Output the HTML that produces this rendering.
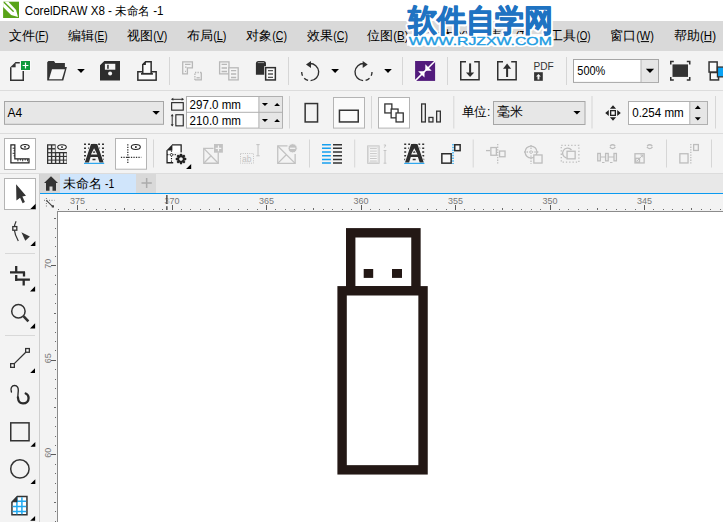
<!DOCTYPE html>
<html><head><meta charset="utf-8">
<style>
html,body{margin:0;padding:0;width:723px;height:522px;overflow:hidden;background:#f3f3f3}
svg{display:block}
text{font-family:"Liberation Sans",sans-serif}
</style></head><body>
<svg width="723" height="522" viewBox="0 0 723 522">
<!-- backgrounds -->
<rect x="0" y="0" width="723" height="21" fill="#ffffff"/>
<rect x="0" y="21" width="723" height="30" fill="#d9d9d9"/>
<rect x="0" y="51" width="723" height="471" fill="#f3f3f3"/>
<rect x="0" y="90" width="723" height="1" fill="#dcdcdc"/>
<rect x="0" y="133" width="723" height="1" fill="#dcdcdc"/>
<rect x="0" y="173" width="723" height="1" fill="#dcdcdc"/>
<!-- tab bar -->
<rect x="39" y="174" width="684" height="19" fill="#e8e8e8"/>
<rect x="40" y="174" width="20" height="19" fill="#d6d6d6"/>
<rect x="60" y="174" width="76" height="19" fill="#d0e5fb"/>
<rect x="136" y="174" width="20" height="19" fill="#d9d9d9"/>
<rect x="39" y="193" width="684" height="1" fill="#0a9af0"/>
<!-- rulers -->
<rect x="39" y="194" width="684" height="328" fill="#f3f3f3"/>
<rect x="39" y="174" width="1" height="348" fill="#cfcfcf"/>
<rect x="57" y="211" width="666" height="1" fill="#8c8c8c"/>
<rect x="57" y="211" width="1" height="311" fill="#8c8c8c"/>
<rect x="58" y="212" width="665" height="310" fill="#ffffff"/>
<!-- title -->
<rect x="3.1" y="1.7" width="15.9" height="16.3" fill="#58a317"/>
<path d="M3.1 1.7 H8.4 L16.1 10 L18 16.9 L11.1 14.9 L3.1 7.1 Z" fill="#fff"/>
<path d="M4.3 2.6 L13.2 11.3" stroke="#58a317" stroke-width="1.4" stroke-linecap="round"/>
<text x="24.8" y="14.8" font-size="12" fill="#000" textLength="138.7" lengthAdjust="spacingAndGlyphs">CorelDRAW X8 - 未命名 -1</text>
<!-- menu -->
<g fill="#000">
<text x="8.6" y="40.3" font-size="13.2">文件</text>
<text x="35.0" y="39.8" font-size="12" textLength="13.6" lengthAdjust="spacingAndGlyphs">(F)</text>
<rect x="38.5" y="41.1" width="6.3" height="1" fill="#000"/>
<text x="67.9" y="40.3" font-size="13.2">编辑</text>
<text x="94.3" y="39.8" font-size="12" textLength="13.3" lengthAdjust="spacingAndGlyphs">(E)</text>
<rect x="97.8" y="41.1" width="6.1" height="1" fill="#000"/>
<text x="126.8" y="40.3" font-size="13.2">视图</text>
<text x="153.2" y="39.8" font-size="12" textLength="14.1" lengthAdjust="spacingAndGlyphs">(V)</text>
<rect x="156.9" y="41.1" width="6.5" height="1" fill="#000"/>
<text x="186.8" y="40.3" font-size="13.2">布局</text>
<text x="213.2" y="39.8" font-size="12" textLength="13.3" lengthAdjust="spacingAndGlyphs">(L)</text>
<rect x="216.7" y="41.1" width="6.1" height="1" fill="#000"/>
<text x="245.8" y="40.3" font-size="13.2">对象</text>
<text x="272.2" y="39.8" font-size="12" textLength="14.8" lengthAdjust="spacingAndGlyphs">(C)</text>
<rect x="276.0" y="41.1" width="6.8" height="1" fill="#000"/>
<text x="306.8" y="40.3" font-size="13.2">效果</text>
<text x="333.2" y="39.8" font-size="12" textLength="14.8" lengthAdjust="spacingAndGlyphs">(C)</text>
<rect x="337.0" y="41.1" width="6.8" height="1" fill="#000"/>
<text x="366.8" y="40.3" font-size="13.2">位图</text>
<text x="393.2" y="39.8" font-size="12" textLength="15.3" lengthAdjust="spacingAndGlyphs">(B)</text>
<rect x="397.2" y="41.1" width="7.0" height="1" fill="#000"/>
<text x="427.5" y="40.3" font-size="13.2">文本</text>
<text x="453.9" y="39.8" font-size="12" textLength="15.1" lengthAdjust="spacingAndGlyphs">(X)</text>
<rect x="457.8" y="41.1" width="6.9" height="1" fill="#000"/>
<text x="489" y="40.3" font-size="13.2">表格</text>
<text x="515.4" y="39.8" font-size="12" textLength="14.6" lengthAdjust="spacingAndGlyphs">(T)</text>
<rect x="519.2" y="41.1" width="6.7" height="1" fill="#000"/>
<text x="550" y="40.3" font-size="13.2">工具</text>
<text x="576.4" y="39.8" font-size="12" textLength="14.1" lengthAdjust="spacingAndGlyphs">(O)</text>
<rect x="580.1" y="41.1" width="6.5" height="1" fill="#000"/>
<text x="609.8" y="40.3" font-size="13.2">窗口</text>
<text x="636.2" y="39.8" font-size="12" textLength="17.8" lengthAdjust="spacingAndGlyphs">(W)</text>
<rect x="640.8" y="41.1" width="8.2" height="1" fill="#000"/>
<text x="673.6" y="40.3" font-size="13.2">帮助</text>
<text x="700.0" y="39.8" font-size="12" textLength="16.0" lengthAdjust="spacingAndGlyphs">(H)</text>
<rect x="704.2" y="41.1" width="7.4" height="1" fill="#000"/>
</g>
<!-- ===== toolbar 1 ===== -->
<g id="tb1">
<!-- new -->
<path d="M10.75 67.5 V80.25 H23.25 V71" fill="none" stroke="#333" stroke-width="1.5"/>
<path d="M15.2 62.75 H19.8" fill="none" stroke="#333" stroke-width="1.5"/>
<path d="M10 67.6 L15.6 62 V67.6 Z" fill="#333"/>
<rect x="10.75" y="67.6" width="12.5" height="12.65" fill="#f7f7f7"/>
<path d="M10.75 67.5 V80.25 H23.25 V71" fill="none" stroke="#333" stroke-width="1.5"/>
<rect x="20" y="60" width="11" height="11" fill="#fafafa"/>
<rect x="21" y="61" width="9" height="9" fill="#0e9a3c"/>
<path d="M22.6 65.5 H28.4 M25.5 62.6 V68.4" stroke="#fff" stroke-width="1.2"/>
<!-- open -->
<path d="M47.2 62.3 L48.4 61.1 H54 L55.3 62.9 H64.9 V67 H66.9 L63.3 80.6 H47.2 Z" fill="#333"/>
<path d="M52 69.2 H64.9 L61.9 79.2 H49 Z" fill="#f7f7f7"/>
<path d="M77.2 69 H84.8 L81 72.9 Z" fill="#000"/>
<!-- save -->
<path d="M100 65.3 L104.3 61 H120 V80.5 H100 Z" fill="#2d2d2d"/>
<rect x="104.9" y="63.8" width="10.4" height="5.9" fill="#f4f4f4"/>
<rect x="107.2" y="64.8" width="1.5" height="4" fill="#2d2d2d"/>
<circle cx="110.1" cy="73.5" r="2" fill="#f4f4f4"/>
<!-- print -->
<rect x="137.85" y="71.75" width="18.3" height="8.4" fill="#fafafa" stroke="#2d2d2d" stroke-width="1.5"/>
<path d="M142.75 73.8 V64.6 L145.6 61.85 H151.15 V73.8" fill="#fafafa" stroke="#2d2d2d" stroke-width="1.5"/>
<path d="M142.2 64.9 L145.9 61.3 V64.9 Z" fill="#2d2d2d"/>
<rect x="141" y="72.9" width="11.9" height="1.8" fill="#2d2d2d"/>
<rect x="169" y="57" width="1" height="28" fill="#d6d6d6"/>
<!-- disabled 1 -->
<g fill="none" stroke="#b8b8b8" stroke-width="1.3">
<path d="M182.7 61.8 H192.4 V67.8 H187.4 V73.8 H182.7 Z"/>
<path d="M185 64.4 H190.5 M185 67.2 H186.6 M185 71.3 H186"/>
<path d="M194.9 79.9 V72.5 H201.3" stroke-dasharray="1.3 1.2"/>
<path d="M201.3 72.5 V79.9 H194.9" />
<path d="M196.5 77.8 H199.8"/>
</g>
<!-- disabled 2 -->
<g fill="none" stroke="#b8b8b8" stroke-width="1.3">
<path d="M219.6 61.8 H229 V73.8 H219.6 Z"/>
<path d="M221.6 64.4 H227 M221.6 68 H227 M221.6 71.5 H227"/>
<rect x="228.8" y="67.8" width="9.4" height="12.1" fill="#f5f5f5"/>
<path d="M231 70.6 H236.2 M231 74 H236.2 M231 77.5 H236.2"/>
</g>
<!-- doc manager -->
<path d="M255.9 63.6 Q255.9 61.1 258.5 61.1 H263.4 Q266 61.1 266 63.6 V74.8 H255.9 Z" fill="#2f2f2f"/>
<path d="M257.8 62.6 H264" stroke="#9a9a9a" stroke-width="1"/>
<rect x="264.2" y="66.2" width="12.6" height="15.2" fill="#f3f3f3"/>
<rect x="265.65" y="67.65" width="9.7" height="12.3" fill="#fafafa" stroke="#2f2f2f" stroke-width="1.5"/>
<path d="M268 70.6 H273 M268 74 H273 M268 77.4 H273" stroke="#555" stroke-width="1.4"/>
<rect x="288" y="57" width="1" height="28" fill="#d6d6d6"/>
<!-- undo -->
<g fill="none" stroke="#2f2f2f" stroke-width="1.35">
<path d="M309.55 63.5 A8.6 8.6 0 0 1 310.6 80.7"/>
<path d="M308.1 80.4 A8.6 8.6 0 0 1 304.2 78.2"/>
<path d="M302.5 75.7 A8.6 8.6 0 0 1 301.7 72.1"/>
</g>
<path d="M306 64.5 L311 61.1 V68 Z" fill="#2f2f2f"/>
<path d="M331.2 69 H339 L335.1 73 Z" fill="#000"/>
<!-- redo -->
<g transform="translate(673.7,0) scale(-1,1)">
<g fill="none" stroke="#2f2f2f" stroke-width="1.35">
<path d="M309.55 63.5 A8.6 8.6 0 0 1 310.6 80.7"/>
<path d="M308.1 80.4 A8.6 8.6 0 0 1 304.2 78.2"/>
<path d="M302.5 75.7 A8.6 8.6 0 0 1 301.7 72.1"/>
</g>
<path d="M306 64.5 L311 61.1 V68 Z" fill="#2f2f2f"/>
</g>
<path d="M384.2 69 H391.8 L388 73 Z" fill="#000"/>
<rect x="402" y="57" width="1" height="28" fill="#d6d6d6"/>
<!-- purple -->
<rect x="415.1" y="61" width="20" height="19.9" fill="#521b7c"/>
<path d="M415.1 80.9 L435.1 61" stroke="#fff" stroke-width="1.5"/>
<path d="M425.3 64.3 V70.7 H431.7 Z M418.1 71.2 H424.5 V77.6 Z" fill="#fff"/>
<rect x="447" y="57" width="1" height="28" fill="#d6d6d6"/>
<!-- import -->
<path d="M466 61.85 H460.75 V79.85 H479.05 V61.85 H474.2" fill="none" stroke="#2f2f2f" stroke-width="1.5"/>
<rect x="469.1" y="63.4" width="2" height="9.5" fill="#2f2f2f"/>
<path d="M466 72.5 H474.2 L470.1 77.1 Z" fill="#2f2f2f"/>
<!-- export -->
<path d="M503 61.85 H497.75 V79.85 H516.15 V61.85 H511.2" fill="none" stroke="#2f2f2f" stroke-width="1.5"/>
<rect x="506.1" y="68" width="2" height="9" fill="#2f2f2f"/>
<path d="M503 68.7 H511.2 L507.1 63.6 Z" fill="#2f2f2f"/>
<!-- pdf -->
<text x="533.6" y="69.5" font-size="10" fill="#333" textLength="20.2" lengthAdjust="spacingAndGlyphs">PDF</text>
<rect x="534.1" y="72.2" width="8.7" height="8.6" fill="#333"/>
<path d="M538.45 74 L536 76.5 H537.5 V79.5 H539.4 V76.5 H540.9 Z" fill="#f3f3f3"/>
<rect x="566" y="57" width="1" height="28" fill="#d6d6d6"/>
<!-- zoom combo -->
<rect x="573.5" y="59.5" width="85" height="22.9" fill="#fff" stroke="#a6a6a6" stroke-width="1"/>
<rect x="641" y="60" width="17" height="21.9" fill="#e6e6e6"/>
<rect x="640.5" y="60" width="1" height="22" fill="#b4b4b4"/>
<text x="577.3" y="75.2" font-size="12.8" fill="#000" textLength="28" lengthAdjust="spacingAndGlyphs">500%</text>
<path d="M645.8 68.8 H654.1 L650 73 Z" fill="#000"/>
<!-- fullscreen -->
<path d="M670.75 64.5 V61.55 H673.8 M686.8 61.55 H689.75 V64.5 M689.75 77 V80 H686.8 M673.8 80 H670.75 V77" fill="none" stroke="#2f2f2f" stroke-width="1.5"/>
<rect x="672.5" y="64.4" width="15.5" height="12.5" fill="#333"/>
<!-- partial icon -->
<rect x="710.25" y="72.5" width="8.3" height="7.45" fill="#fafafa" stroke="#333" stroke-width="1.5"/>
<rect x="709.05" y="61.95" width="8.1" height="10.1" fill="#fafafa" stroke="#333" stroke-width="1.5"/>
<rect x="717.45" y="67.05" width="7" height="9.8" fill="#0aa3f5" stroke="#333" stroke-width="1.3"/>
</g>


<!-- ===== toolbar 2 ===== -->
<g id="tb2">
<rect x="4.5" y="101.5" width="159" height="22.8" fill="#e7e7e7" stroke="#a6a6a6" stroke-width="1"/>
<text x="7.6" y="116.8" font-size="12" fill="#000">A4</text>
<path d="M152.4 110.9 H159.9 L156.15 114.8 Z" fill="#000"/>
<!-- w/h icons -->
<path d="M171.6 99.3 H183.4" stroke="#333" stroke-width="1"/>
<path d="M171.1 99.3 L173.3 97.8 V100.8 Z M183.9 99.3 L181.7 97.8 V100.8 Z" fill="#333"/>
<rect x="171.65" y="102.65" width="11.6" height="7.5" fill="none" stroke="#222" stroke-width="1.1"/>
<path d="M172.2 114.6 V125.8" stroke="#333" stroke-width="1"/>
<path d="M172.2 114 L170.7 116.2 H173.7 Z M172.2 126.4 L170.7 124.2 H173.7 Z" fill="#333"/>
<rect x="175.85" y="114.75" width="7.4" height="11.1" fill="none" stroke="#222" stroke-width="1.1"/>
<!-- spinboxes -->
<rect x="186.5" y="96.5" width="96" height="31.6" fill="#fff" stroke="#b0b0b0" stroke-width="1"/>
<rect x="258.9" y="97" width="23.1" height="30.6" fill="#e6e6e6"/>
<rect x="258.4" y="96.5" width="1" height="31.6" fill="#b0b0b0"/>
<rect x="186.5" y="111.8" width="96" height="1" fill="#b0b0b0"/>
<text x="189.6" y="108.9" font-size="12" fill="#000" textLength="51.4" lengthAdjust="spacingAndGlyphs">297.0 mm</text>
<text x="189.6" y="124.9" font-size="12" fill="#000" textLength="51.4" lengthAdjust="spacingAndGlyphs">210.0 mm</text>
<path d="M261.9 103 H268 L264.95 106 Z M261.9 119 H268 L264.95 122 Z" fill="#000"/>
<path d="M274.2 106 H280 L277.1 103.1 Z M274.2 122 H280 L277.1 119.1 Z" fill="#000"/>
<rect x="289" y="96" width="1" height="32.5" fill="#d6d6d6"/>
<!-- portrait / landscape -->
<rect x="305.15" y="103.55" width="12.4" height="18.4" fill="none" stroke="#333" stroke-width="1.5"/>
<rect x="333.5" y="97.5" width="31" height="30.6" fill="#fafafa" stroke="#b4b4b4" stroke-width="1"/>
<rect x="339.45" y="110.25" width="18.8" height="11.7" fill="none" stroke="#333" stroke-width="1.5"/>
<rect x="371" y="96" width="1" height="32.5" fill="#d6d6d6"/>
<!-- pages -->
<rect x="378.5" y="97.5" width="31" height="30.6" fill="#ffffff" stroke="#b4b4b4" stroke-width="1"/>
<g fill="#fdfdfd" stroke="#333" stroke-width="1.3">
<rect x="384.85" y="103.95" width="7" height="9"/>
<rect x="391.15" y="109.05" width="6.9" height="8.8"/>
<rect x="396.05" y="112.95" width="7.2" height="9"/>
</g>
<!-- bars -->
<g fill="none" stroke="#333" stroke-width="1.3">
<rect x="421.65" y="103.95" width="3.7" height="18"/>
<rect x="428.95" y="117.45" width="4" height="4.5"/>
<rect x="436.65" y="111.15" width="3.7" height="10.8"/>
</g>
<rect x="453.3" y="96" width="1" height="32.5" fill="#d6d6d6"/>
<!-- units -->
<text x="461.8" y="116.2" font-size="12.5" fill="#000" textLength="28.6" lengthAdjust="spacingAndGlyphs">单位:</text>
<rect x="493.5" y="101.5" width="91.5" height="23" fill="#e7e7e7" stroke="#a6a6a6" stroke-width="1"/>
<text x="496.6" y="116.4" font-size="13.3" fill="#000">毫米</text>
<path d="M573.4 111 H580.5 L576.95 114.5 Z" fill="#000"/>
<rect x="591.5" y="96" width="1" height="32.5" fill="#d6d6d6"/>
<!-- nudge -->
<g fill="#222">
<path d="M613 105.2 L609.9 108.7 H616.1 Z M613 120.8 L609.9 117.3 H616.1 Z M605.2 113 L608.8 109.9 V116.1 Z M620.8 113 L617.2 109.9 V116.1 Z"/>
</g>
<rect x="610.65" y="110.65" width="4.7" height="4.7" fill="#fafafa" stroke="#222" stroke-width="1.3"/>
<rect x="628.5" y="101.5" width="79" height="23" fill="#fff" stroke="#b0b0b0" stroke-width="1"/>
<rect x="689.8" y="102" width="17.2" height="22" fill="#e6e6e6"/>
<rect x="689.3" y="101.5" width="1" height="23" fill="#b0b0b0"/>
<text x="632.2" y="117.2" font-size="12.5" fill="#000" textLength="51.6" lengthAdjust="spacingAndGlyphs">0.254 mm</text>
<path d="M694.8 109 H700.8 L697.8 105.6 Z M694.8 117.3 H700.8 L697.8 120.6 Z" fill="#000"/>
<rect x="715" y="96" width="1" height="32.5" fill="#d6d6d6"/>
</g>


<!-- ===== toolbar 3 ===== -->
<g id="tb3">
<rect x="4.5" y="138.5" width="31" height="31" fill="#ffffff" stroke="#b4b4b4" stroke-width="1"/>
<!-- ruler icon -->
<path d="M10.9 144.9 H14.85 V158.85 H29 V162.85 H10.9 Z" fill="#fff" stroke="#222" stroke-width="1.2"/>
<path d="M12.6 148.2 H15 M13.6 150.7 H15 M12.6 153.3 H15 M13.6 155.8 H15" stroke="#333" stroke-width="1"/>
<path d="M17.9 159 V161.3 M20.4 159 V160.5 M22.7 159 V161.3 M25.2 159 V160.5 M27.6 159 V161.3" stroke="#333" stroke-width="1"/>
<ellipse cx="25" cy="146.8" rx="4.2" ry="2.3" fill="#fff" stroke="#222" stroke-width="1.1"/>
<rect x="24.2" y="146" width="1.6" height="1.6" fill="#222"/>
<!-- grid icon -->
<path d="M47 144.2 H55.6 V152 H66.9 V164 H47 Z" fill="#333"/>
<g fill="#f3f3f3">
<rect x="48.3" y="145.5" width="2.6" height="2.6"/><rect x="52.3" y="145.5" width="2.6" height="2.6"/>
<rect x="48.3" y="149.5" width="2.6" height="2.6"/><rect x="52.3" y="149.5" width="2.6" height="2.6"/>
<rect x="48.3" y="153.3" width="2.6" height="2.6"/><rect x="52.3" y="153.3" width="2.6" height="2.6"/><rect x="56.3" y="153.3" width="2.6" height="2.6"/><rect x="60.3" y="153.3" width="2.6" height="2.6"/><rect x="64.1" y="153.3" width="2.4" height="2.6"/>
<rect x="48.3" y="157" width="2.6" height="2.6"/><rect x="52.3" y="157" width="2.6" height="2.6"/><rect x="56.3" y="157" width="2.6" height="2.6"/><rect x="60.3" y="157" width="2.6" height="2.6"/><rect x="64.1" y="157" width="2.4" height="2.6"/>
<rect x="48.3" y="160.6" width="2.6" height="2.3"/><rect x="52.3" y="160.6" width="2.6" height="2.3"/><rect x="56.3" y="160.6" width="2.6" height="2.3"/><rect x="60.3" y="160.6" width="2.6" height="2.3"/><rect x="64.1" y="160.6" width="2.4" height="2.3"/>
</g>
<rect x="56.5" y="143" width="11" height="8" fill="#f3f3f3"/>
<ellipse cx="62" cy="147.1" rx="4.3" ry="2.4" fill="#fff" stroke="#222" stroke-width="1.1"/>
<rect x="61.2" y="146.3" width="1.6" height="1.6" fill="#222"/>
<!-- A icon 1 -->
<g id="aicon">
<path d="M84 144.3 h2 m2 0 h2 m2.5 0 h3 m2.5 0 h2 m2 0 h2 M84 148.3 h2 m2 0 h2 m2.5 0 h3 m2.5 0 h2 m2 0 h2 M84 152.1 h2 m2 0 h2 m2.5 0 h3 m2.5 0 h2 m2 0 h2 M84 155.8 h2 m2 0 h2 m2.5 0 h3 m2.5 0 h2 m2 0 h2 M84 159.6 h2 m2 0 h2 m2.5 0 h3 m2.5 0 h2 m2 0 h2" stroke="#333" stroke-width="1.5"/>
<path d="M84.8 162.5 L91 144 H97.2 L103.6 162.5 H99.5 L97.7 156.9 H90.6 L88.9 162.5 Z M90.9 154.5 L94.1 148.3 L97.3 154.5 Z" fill="#2d2d2d" fill-rule="evenodd" stroke="#f6f6f6" stroke-width="1.6" paint-order="stroke"/>
<rect x="84" y="162.8" width="20.2" height="1.1" fill="#1aa0ef"/>
</g>
<!-- guidelines -->
<rect x="115.5" y="138.5" width="31" height="30.7" fill="#ffffff" stroke="#b4b4b4" stroke-width="1"/>
<path d="M127.8 144.2 V164 M120.9 157.3 H141.3" stroke="#333" stroke-width="1.3" stroke-dasharray="1.3 1.2"/>
<ellipse cx="135.8" cy="147" rx="4.5" ry="2.5" fill="#fff" stroke="#222" stroke-width="1.1"/>
<rect x="135" y="146.2" width="1.7" height="1.7" fill="#222"/>
<rect x="153" y="139.5" width="1" height="28" fill="#d6d6d6"/>
<!-- doc options -->
<path d="M166.5 150.3 V163.3 H173.2 V150.3 Z" fill="#fff"/>
<path d="M172 144.3 H181.8 V152.5 H173.2 V150.3 H172 Z" fill="#fff"/>
<path d="M167.05 150.3 V162.75 H173.2 M172.1 144.95 H181.15 V152.4" fill="none" stroke="#222" stroke-width="1.3"/>
<path d="M166.4 150.6 L172.4 144.3 V150.6 Z" fill="#222"/>
<path d="M171.5 150.5 V161.8 M167.2 154.7 H175.8" stroke="#1a1a1a" stroke-width="1.2" stroke-dasharray="1.2 1.3"/>
<circle cx="171.5" cy="154.7" r="1.2" fill="#fff" stroke="#333" stroke-width="0.8"/>
<g transform="translate(181,159)">
<circle r="6.2" fill="#f3f3f3"/>
<g fill="#222"><rect x="-1.15" y="-5.3" width="2.3" height="2.6" rx="0.6" transform="rotate(0)"/><rect x="-1.15" y="-5.3" width="2.3" height="2.6" rx="0.6" transform="rotate(45)"/><rect x="-1.15" y="-5.3" width="2.3" height="2.6" rx="0.6" transform="rotate(90)"/><rect x="-1.15" y="-5.3" width="2.3" height="2.6" rx="0.6" transform="rotate(135)"/><rect x="-1.15" y="-5.3" width="2.3" height="2.6" rx="0.6" transform="rotate(180)"/><rect x="-1.15" y="-5.3" width="2.3" height="2.6" rx="0.6" transform="rotate(225)"/><rect x="-1.15" y="-5.3" width="2.3" height="2.6" rx="0.6" transform="rotate(270)"/><rect x="-1.15" y="-5.3" width="2.3" height="2.6" rx="0.6" transform="rotate(315)"/></g>
<circle r="2.85" fill="none" stroke="#222" stroke-width="2.1"/>
</g>
<path d="M186.1 169 H191.2 V164.1 Z" fill="#000"/>
<!-- image+ disabled -->
<g fill="none" stroke="#c2c2c2" stroke-width="1.3">
<path d="M213.5 148.35 H203.75 V163.25 H218.25 V152.5"/>
<path d="M203.75 148.35 L218.25 163.25 M203.75 163.25 L211.5 155.3"/>
</g>
<rect x="214" y="144" width="8.9" height="8.7" fill="#c2c2c2"/>
<path d="M215.6 148.35 H221.3 M218.45 145.5 V151.2" stroke="#f3f3f3" stroke-width="1.2"/>
<!-- ab disabled -->
<rect x="240.5" y="153.5" width="13" height="9.7" fill="none" stroke="#c2c2c2" stroke-width="1" stroke-dasharray="1 1.2"/>
<text x="242" y="161.8" font-size="8.5" fill="#c2c2c2">ab</text>
<path d="M258 144.6 V155.8 M256.3 144.6 H259.7 M256.3 155.8 H259.7" stroke="#c2c2c2" stroke-width="1"/>
<!-- image- disabled -->
<g fill="none" stroke="#c2c2c2" stroke-width="1.3">
<path d="M287.5 145.95 H277.75 V163.35 H295.15 V154"/>
<path d="M277.75 145.95 L295.15 163.35 M277.75 163.35 L286 155"/>
</g>
<circle cx="292.6" cy="148.3" r="4.6" fill="#c2c2c2" stroke="#f3f3f3" stroke-width="1"/>
<path d="M289.9 148.3 H295.3" stroke="#f3f3f3" stroke-width="1.3"/>
<rect x="309" y="139.5" width="1" height="28" fill="#d6d6d6"/>
<!-- lines -->
<path d="M322 144.8 H330.9 M322 148.3 H330.9 M322 151.9 H330.9 M322 155.7 H330.9 M322 159.5 H330.9 M322 163.1 H330.9" stroke="#17a0ef" stroke-width="1.5"/>
<path d="M333 144.8 H342 M333 148.3 H342 M333 151.9 H342 M333 155.7 H342 M333 159.5 H342 M333 163.1 H342" stroke="#333" stroke-width="1.5"/>
<rect x="354.2" y="139.5" width="1" height="28" fill="#d6d6d6"/>
<!-- text frame disabled -->
<rect x="367.7" y="145.9" width="11.4" height="17.4" fill="#f7f7f7" stroke="#c4c4c4" stroke-width="1"/>
<rect x="368.7" y="146.9" width="9.4" height="15.4" fill="none" stroke="#d8d8d8" stroke-width="1"/>
<path d="M370 148.6 H376.8 M370 151.1 H376.8 M370 153.6 H376.8 M370 156.1 H376.8 M370 158.5 H376.8 M370 161 H376.8" stroke="#c8c8c8" stroke-width="1"/>
<path d="M385 150.5 V163.2 M383.6 150.5 H386.4 M383.6 163.2 H386.4 M383.8 145 H385.8 L384.4 147.6" fill="none" stroke="#c4c4c4" stroke-width="1"/>
<!-- A icon 2 -->
<use href="#aicon" transform="translate(320.2,0)"/>
<!-- squares icon -->
<path d="M453 144 V164" stroke="#17a0ef" stroke-width="1.3" stroke-dasharray="1.5 1.2"/>
<rect x="441.85" y="153.75" width="9.3" height="9.4" fill="#f7f7f7" stroke="#2d2d2d" stroke-width="1.5"/>
<rect x="454.75" y="144.75" width="5.4" height="5.9" fill="#f7f7f7" stroke="#2d2d2d" stroke-width="1.5"/>
<rect x="472.7" y="139.5" width="1" height="28" fill="#d6d6d6"/>
<!-- align disabled -->
<g fill="none" stroke="#bdbdbd" stroke-width="1.3">
<rect x="490.85" y="147.55" width="5.5" height="7.7"/>
<rect x="499.55" y="151.05" width="5.5" height="5.7"/>
<path d="M497.7 144 V164" stroke-dasharray="1.3 1.3"/>
<path d="M486 150.6 H490"/>
<!-- target -->
<circle cx="531" cy="152" r="5.9"/>
<path d="M531 145 V164 M524 152 H539" stroke-dasharray="1.3 1.3"/>
<rect x="533.85" y="154.95" width="8.2" height="8.1" fill="#f3f3f3"/>
<!-- dotted squares -->
<rect x="561.3" y="145.3" width="17.6" height="16.9" stroke-dasharray="1.3 2"/>
<path d="M566.5 158 A5 5 0 1 1 571.5 150" />
<rect x="567.05" y="151.25" width="8.1" height="7.6" fill="#f3f3f3"/>
<!-- distribute -->
<rect x="597.75" y="153.45" width="2.6" height="7.4"/>
<rect x="605.6" y="153.45" width="2.6" height="7.4"/>
<rect x="614" y="153.45" width="2.4" height="7.4"/>
<path d="M600.4 157 H605.4 M608.2 157 H614" stroke-width="1"/>
<path d="M602 162.5 H604.5 M610 162.5 H612.5" stroke-width="1"/>
<path d="M609.8 146.8 Q612.6 150.5 615.4 146.8 M610 146 Q612.6 143.5 615.2 146" />
<!-- resize -->
<rect x="634.95" y="153.75" width="9.2" height="9.2"/>
<rect x="635.7" y="158.3" width="3.8" height="3.9"/>
<path d="M637 161 L642.8 155.1 M640.5 155.1 H642.8 V157.4" stroke-width="1"/>
<path d="M646.9 146.8 Q649.7 150.5 652.5 146.8 M647.1 146 Q649.7 143.5 652.3 146" />
</g>
<rect x="666" y="139.5" width="1" height="28" fill="#d6d6d6"/>
<g fill="none" stroke="#bdbdbd" stroke-width="1.3">
<rect x="679.85" y="153.75" width="8.2" height="9.2"/>
<rect x="693.65" y="144.55" width="4.7" height="5.9"/>
<path d="M690.8 144 V164" stroke-dasharray="1.3 1.3"/>
</g>
<rect x="711" y="139.5" width="1" height="28" fill="#d6d6d6"/>
</g>


<!-- ===== rulers ===== -->
<g id="rulers">
<text x="77.50" y="203.9" font-size="9.8" fill="#787878" text-anchor="middle" textLength="15" lengthAdjust="spacingAndGlyphs">375</text>
<text x="172.00" y="203.9" font-size="9.8" fill="#787878" text-anchor="middle" textLength="15" lengthAdjust="spacingAndGlyphs">370</text>
<text x="266.50" y="203.9" font-size="9.8" fill="#787878" text-anchor="middle" textLength="15" lengthAdjust="spacingAndGlyphs">365</text>
<text x="361.00" y="203.9" font-size="9.8" fill="#787878" text-anchor="middle" textLength="15" lengthAdjust="spacingAndGlyphs">360</text>
<text x="455.50" y="203.9" font-size="9.8" fill="#787878" text-anchor="middle" textLength="15" lengthAdjust="spacingAndGlyphs">355</text>
<text x="550.00" y="203.9" font-size="9.8" fill="#787878" text-anchor="middle" textLength="15" lengthAdjust="spacingAndGlyphs">350</text>
<text x="644.50" y="203.9" font-size="9.8" fill="#787878" text-anchor="middle" textLength="15" lengthAdjust="spacingAndGlyphs">345</text>
<rect x="58" y="209" width="1" height="1" fill="#6a6a6a"/>
<rect x="68" y="209" width="1" height="1" fill="#6a6a6a"/>
<rect x="77" y="205" width="1" height="5" fill="#5a5a5a"/>
<rect x="86" y="209" width="1" height="1" fill="#6a6a6a"/>
<rect x="96" y="209" width="1" height="1" fill="#6a6a6a"/>
<rect x="105" y="209" width="1" height="1" fill="#6a6a6a"/>
<rect x="115" y="209" width="1" height="1" fill="#6a6a6a"/>
<rect x="124" y="208" width="1" height="2" fill="#6a6a6a"/>
<rect x="134" y="209" width="1" height="1" fill="#6a6a6a"/>
<rect x="143" y="209" width="1" height="1" fill="#6a6a6a"/>
<rect x="153" y="209" width="1" height="1" fill="#6a6a6a"/>
<rect x="162" y="209" width="1" height="1" fill="#6a6a6a"/>
<rect x="172" y="205" width="1" height="5" fill="#5a5a5a"/>
<rect x="181" y="209" width="1" height="1" fill="#6a6a6a"/>
<rect x="190" y="209" width="1" height="1" fill="#6a6a6a"/>
<rect x="200" y="209" width="1" height="1" fill="#6a6a6a"/>
<rect x="209" y="209" width="1" height="1" fill="#6a6a6a"/>
<rect x="219" y="208" width="1" height="2" fill="#6a6a6a"/>
<rect x="228" y="209" width="1" height="1" fill="#6a6a6a"/>
<rect x="238" y="209" width="1" height="1" fill="#6a6a6a"/>
<rect x="247" y="209" width="1" height="1" fill="#6a6a6a"/>
<rect x="257" y="209" width="1" height="1" fill="#6a6a6a"/>
<rect x="266" y="205" width="1" height="5" fill="#5a5a5a"/>
<rect x="275" y="209" width="1" height="1" fill="#6a6a6a"/>
<rect x="285" y="209" width="1" height="1" fill="#6a6a6a"/>
<rect x="294" y="209" width="1" height="1" fill="#6a6a6a"/>
<rect x="304" y="209" width="1" height="1" fill="#6a6a6a"/>
<rect x="313" y="208" width="1" height="2" fill="#6a6a6a"/>
<rect x="323" y="209" width="1" height="1" fill="#6a6a6a"/>
<rect x="332" y="209" width="1" height="1" fill="#6a6a6a"/>
<rect x="342" y="209" width="1" height="1" fill="#6a6a6a"/>
<rect x="351" y="209" width="1" height="1" fill="#6a6a6a"/>
<rect x="361" y="205" width="1" height="5" fill="#5a5a5a"/>
<rect x="370" y="209" width="1" height="1" fill="#6a6a6a"/>
<rect x="379" y="209" width="1" height="1" fill="#6a6a6a"/>
<rect x="389" y="209" width="1" height="1" fill="#6a6a6a"/>
<rect x="398" y="209" width="1" height="1" fill="#6a6a6a"/>
<rect x="408" y="208" width="1" height="2" fill="#6a6a6a"/>
<rect x="417" y="209" width="1" height="1" fill="#6a6a6a"/>
<rect x="427" y="209" width="1" height="1" fill="#6a6a6a"/>
<rect x="436" y="209" width="1" height="1" fill="#6a6a6a"/>
<rect x="446" y="209" width="1" height="1" fill="#6a6a6a"/>
<rect x="455" y="205" width="1" height="5" fill="#5a5a5a"/>
<rect x="464" y="209" width="1" height="1" fill="#6a6a6a"/>
<rect x="474" y="209" width="1" height="1" fill="#6a6a6a"/>
<rect x="483" y="209" width="1" height="1" fill="#6a6a6a"/>
<rect x="493" y="209" width="1" height="1" fill="#6a6a6a"/>
<rect x="502" y="208" width="1" height="2" fill="#6a6a6a"/>
<rect x="512" y="209" width="1" height="1" fill="#6a6a6a"/>
<rect x="521" y="209" width="1" height="1" fill="#6a6a6a"/>
<rect x="531" y="209" width="1" height="1" fill="#6a6a6a"/>
<rect x="540" y="209" width="1" height="1" fill="#6a6a6a"/>
<rect x="550" y="205" width="1" height="5" fill="#5a5a5a"/>
<rect x="559" y="209" width="1" height="1" fill="#6a6a6a"/>
<rect x="568" y="209" width="1" height="1" fill="#6a6a6a"/>
<rect x="578" y="209" width="1" height="1" fill="#6a6a6a"/>
<rect x="587" y="209" width="1" height="1" fill="#6a6a6a"/>
<rect x="597" y="208" width="1" height="2" fill="#6a6a6a"/>
<rect x="606" y="209" width="1" height="1" fill="#6a6a6a"/>
<rect x="616" y="209" width="1" height="1" fill="#6a6a6a"/>
<rect x="625" y="209" width="1" height="1" fill="#6a6a6a"/>
<rect x="635" y="209" width="1" height="1" fill="#6a6a6a"/>
<rect x="644" y="205" width="1" height="5" fill="#5a5a5a"/>
<rect x="653" y="209" width="1" height="1" fill="#6a6a6a"/>
<rect x="663" y="209" width="1" height="1" fill="#6a6a6a"/>
<rect x="672" y="209" width="1" height="1" fill="#6a6a6a"/>
<rect x="682" y="209" width="1" height="1" fill="#6a6a6a"/>
<rect x="691" y="208" width="1" height="2" fill="#6a6a6a"/>
<rect x="701" y="209" width="1" height="1" fill="#6a6a6a"/>
<rect x="710" y="209" width="1" height="1" fill="#6a6a6a"/>
<rect x="720" y="209" width="1" height="1" fill="#6a6a6a"/>
<text transform="translate(51,268.70) rotate(-90)" x="0" y="0" font-size="9.6" fill="#787878" textLength="10" lengthAdjust="spacingAndGlyphs">70</text>
<text transform="translate(51,363.20) rotate(-90)" x="0" y="0" font-size="9.6" fill="#787878" textLength="10" lengthAdjust="spacingAndGlyphs">65</text>
<text transform="translate(51,457.70) rotate(-90)" x="0" y="0" font-size="9.6" fill="#787878" textLength="10" lengthAdjust="spacingAndGlyphs">60</text>
<rect x="54" y="218" width="2" height="1" fill="#6a6a6a"/>
<rect x="55" y="228" width="1" height="1" fill="#6a6a6a"/>
<rect x="55" y="237" width="1" height="1" fill="#6a6a6a"/>
<rect x="55" y="246" width="1" height="1" fill="#6a6a6a"/>
<rect x="55" y="256" width="1" height="1" fill="#6a6a6a"/>
<rect x="51" y="265" width="5" height="1" fill="#5a5a5a"/>
<rect x="55" y="275" width="1" height="1" fill="#6a6a6a"/>
<rect x="55" y="284" width="1" height="1" fill="#6a6a6a"/>
<rect x="55" y="294" width="1" height="1" fill="#6a6a6a"/>
<rect x="55" y="303" width="1" height="1" fill="#6a6a6a"/>
<rect x="54" y="313" width="2" height="1" fill="#6a6a6a"/>
<rect x="55" y="322" width="1" height="1" fill="#6a6a6a"/>
<rect x="55" y="332" width="1" height="1" fill="#6a6a6a"/>
<rect x="55" y="341" width="1" height="1" fill="#6a6a6a"/>
<rect x="55" y="350" width="1" height="1" fill="#6a6a6a"/>
<rect x="51" y="360" width="5" height="1" fill="#5a5a5a"/>
<rect x="55" y="369" width="1" height="1" fill="#6a6a6a"/>
<rect x="55" y="379" width="1" height="1" fill="#6a6a6a"/>
<rect x="55" y="388" width="1" height="1" fill="#6a6a6a"/>
<rect x="55" y="398" width="1" height="1" fill="#6a6a6a"/>
<rect x="54" y="407" width="2" height="1" fill="#6a6a6a"/>
<rect x="55" y="417" width="1" height="1" fill="#6a6a6a"/>
<rect x="55" y="426" width="1" height="1" fill="#6a6a6a"/>
<rect x="55" y="436" width="1" height="1" fill="#6a6a6a"/>
<rect x="55" y="445" width="1" height="1" fill="#6a6a6a"/>
<rect x="51" y="454" width="5" height="1" fill="#5a5a5a"/>
<rect x="55" y="464" width="1" height="1" fill="#6a6a6a"/>
<rect x="55" y="473" width="1" height="1" fill="#6a6a6a"/>
<rect x="55" y="483" width="1" height="1" fill="#6a6a6a"/>
<rect x="55" y="492" width="1" height="1" fill="#6a6a6a"/>
<rect x="54" y="502" width="2" height="1" fill="#6a6a6a"/>
<rect x="55" y="511" width="1" height="1" fill="#6a6a6a"/>
<rect x="55" y="521" width="1" height="1" fill="#6a6a6a"/>
<path d="M44 200.3 H54.5" stroke="#777" stroke-width="1" stroke-dasharray="1 1.5"/>
<path d="M46.4 198 V208" stroke="#777" stroke-width="1" stroke-dasharray="1 1.5"/>
<path d="M46.4 200.3 L52.5 206.4" stroke="#444" stroke-width="1.1"/>
<rect x="51.8" y="205.3" width="2.2" height="2.2" fill="#444"/>
<rect x="166" y="194.5" width="3" height="16" fill="#f8f8f8" opacity="0.6"/>
<rect x="166.4" y="195" width="1" height="9" fill="#000"/>
<rect x="166.4" y="206.2" width="1" height="3.8" fill="#000"/>
</g>
<!-- ===== toolbox ===== -->
<g id="toolbox">
<rect x="4.5" y="178.5" width="31" height="31" fill="#ffffff" stroke="#b4b4b4" stroke-width="1"/>
<path d="M16.1 184.2 L26 195.8 L22.4 196.5 L24.9 202 L22.6 203.3 L20.1 197.7 L16.4 200.4 Z" fill="#333"/>
<g fill="#000">
<path d="M30.4 209 H35.6 V203.8 Z"/>
<path d="M30.4 246 H35.4 V241 Z"/>
<path d="M30 291.4 H35.1 V286.2 Z"/>
<path d="M30 328.4 H35.1 V323.3 Z"/>
<path d="M30.2 373 H35 V368.2 Z"/>
<path d="M30.5 446.8 H35.3 V441.9 Z"/>
<path d="M30.5 484 H35.3 V479.2 Z"/>
<path d="M30.2 520.8 H35.1 V516 Z"/>
</g>
<!-- shape -->
<path d="M16.1 221.3 Q11.5 229 18.3 241" fill="none" stroke="#333" stroke-width="1.2"/>
<rect x="12.8" y="226.6" width="4" height="3.6" fill="#fafafa" stroke="#333" stroke-width="1.3"/>
<path d="M21.4 232.2 L29.9 236.4 L25.3 240.8 Z" fill="#333"/>
<rect x="5" y="253" width="30" height="1" fill="#d8d8d8"/>
<!-- crop -->
<path d="M16.2 266 V273.6 M10 272.35 H25 M24 272.35 V276.4 M16.2 275 V281 M15.2 279.7 H29.9 M23.7 279.7 V285.6" fill="none" stroke="#2a2a2a" stroke-width="2.3"/>
<!-- zoom -->
<circle cx="18.4" cy="311.2" r="6.7" fill="none" stroke="#333" stroke-width="1.5"/>
<path d="M23.4 316.2 L28.4 321.3" stroke="#333" stroke-width="2.6"/>
<rect x="5" y="335" width="30" height="1" fill="#d8d8d8"/>
<!-- line -->
<path d="M13.5 364.4 L26.5 351.5" stroke="#333" stroke-width="1.3"/>
<rect x="10.65" y="363.65" width="3.7" height="3.7" fill="#fafafa" stroke="#333" stroke-width="1.3"/>
<rect x="25.65" y="348.55" width="3.7" height="3.7" fill="#fafafa" stroke="#333" stroke-width="1.3"/>
<!-- bezier hook -->
<path d="M11.4 392 C10 388 12 385.5 14.6 385.5 C17.5 385.5 18.4 388 18.3 390.5 C18.2 393 17.6 396 17.9 398.5" fill="none" stroke="#2a2a2a" stroke-width="1.4" stroke-linecap="round"/>
<path d="M17.9 397.5 C18.3 401.8 20.5 403.4 23 403.4 C26.5 403.4 28.6 401 28.6 398 C28.6 395.8 27.3 394.2 25.7 393.5" fill="none" stroke="#2a2a2a" stroke-width="2.3" stroke-linecap="round"/>
<!-- rect -->
<rect x="10.75" y="422.85" width="18.3" height="17.9" fill="none" stroke="#333" stroke-width="1.5"/>
<!-- ellipse -->
<circle cx="19.9" cy="468.9" r="9.2" fill="none" stroke="#333" stroke-width="1.5"/>
<!-- table -->
<path d="M11.95 502.2 V514.85 H26.95 V496.55 H17.4 Z" fill="#fff" stroke="#333" stroke-width="1.5"/>
<path d="M16.9 497.3 V514.2 M21.9 497.3 V514.2 M12.7 501.3 H26.2 M12.7 506.4 H26.2 M12.7 511.4 H26.2" stroke="#1fa8f0" stroke-width="1.5"/>
<path d="M11.2 502.2 L17.4 495.8 V502.2 Z" fill="#333"/>

</g>
<!-- ===== tab bar content ===== -->
<path d="M51 176.3 L44 183 H46 V190.8 H49.5 V186.5 H52.5 V190.8 H56 V183 H58 Z" fill="#333"/>
<text x="62.6" y="188.2" font-size="13.4" fill="#000">未命名</text>
<text x="105" y="188.2" font-size="12.5" fill="#000" textLength="9.3" lengthAdjust="spacingAndGlyphs">-1</text>
<path d="M141.5 183 H151.8 M146.65 178 V188" stroke="#ababab" stroke-width="1.5"/>

<!-- usb drawing -->
<g fill="none" stroke="#231815" stroke-width="9.4">
<rect x="350.7" y="232.8" width="65.25" height="58" />
<rect x="342.1" y="290.8" width="80.95" height="179.05" fill="#fff"/>
</g>
<rect x="363.7" y="269" width="9.5" height="8.9" fill="#231815"/>
<rect x="392" y="269" width="10" height="8.9" fill="#231815"/>

<!-- ===== watermark ===== -->
<rect x="407" y="34" width="145.4" height="11.8" fill="#fff" opacity="0.85"/>
<text x="407.5" y="30.9" font-size="31" font-weight="bold" fill="#fff" stroke="#ffffff" stroke-width="5" stroke-linejoin="round" textLength="145.5" lengthAdjust="spacingAndGlyphs">软件自学网</text>
<text x="408.8" y="44.6" font-size="11" fill="#fff" stroke="#ffffff" stroke-width="4" stroke-linejoin="round" textLength="143" lengthAdjust="spacingAndGlyphs">WWW.RJZXW.COM</text>
<text x="407.5" y="30.9" font-size="31" font-weight="bold" fill="#1f73c2" stroke="#1f73c2" stroke-width="0.9" stroke-linejoin="round" textLength="145.5" lengthAdjust="spacingAndGlyphs">软件自学网</text>
<text x="408.8" y="44.6" font-size="11" fill="#1b9ce3" stroke="#1b9ce3" stroke-width="0.35" stroke-linejoin="round" textLength="143" lengthAdjust="spacingAndGlyphs">WWW.RJZXW.COM</text>
</svg>
</body></html>
